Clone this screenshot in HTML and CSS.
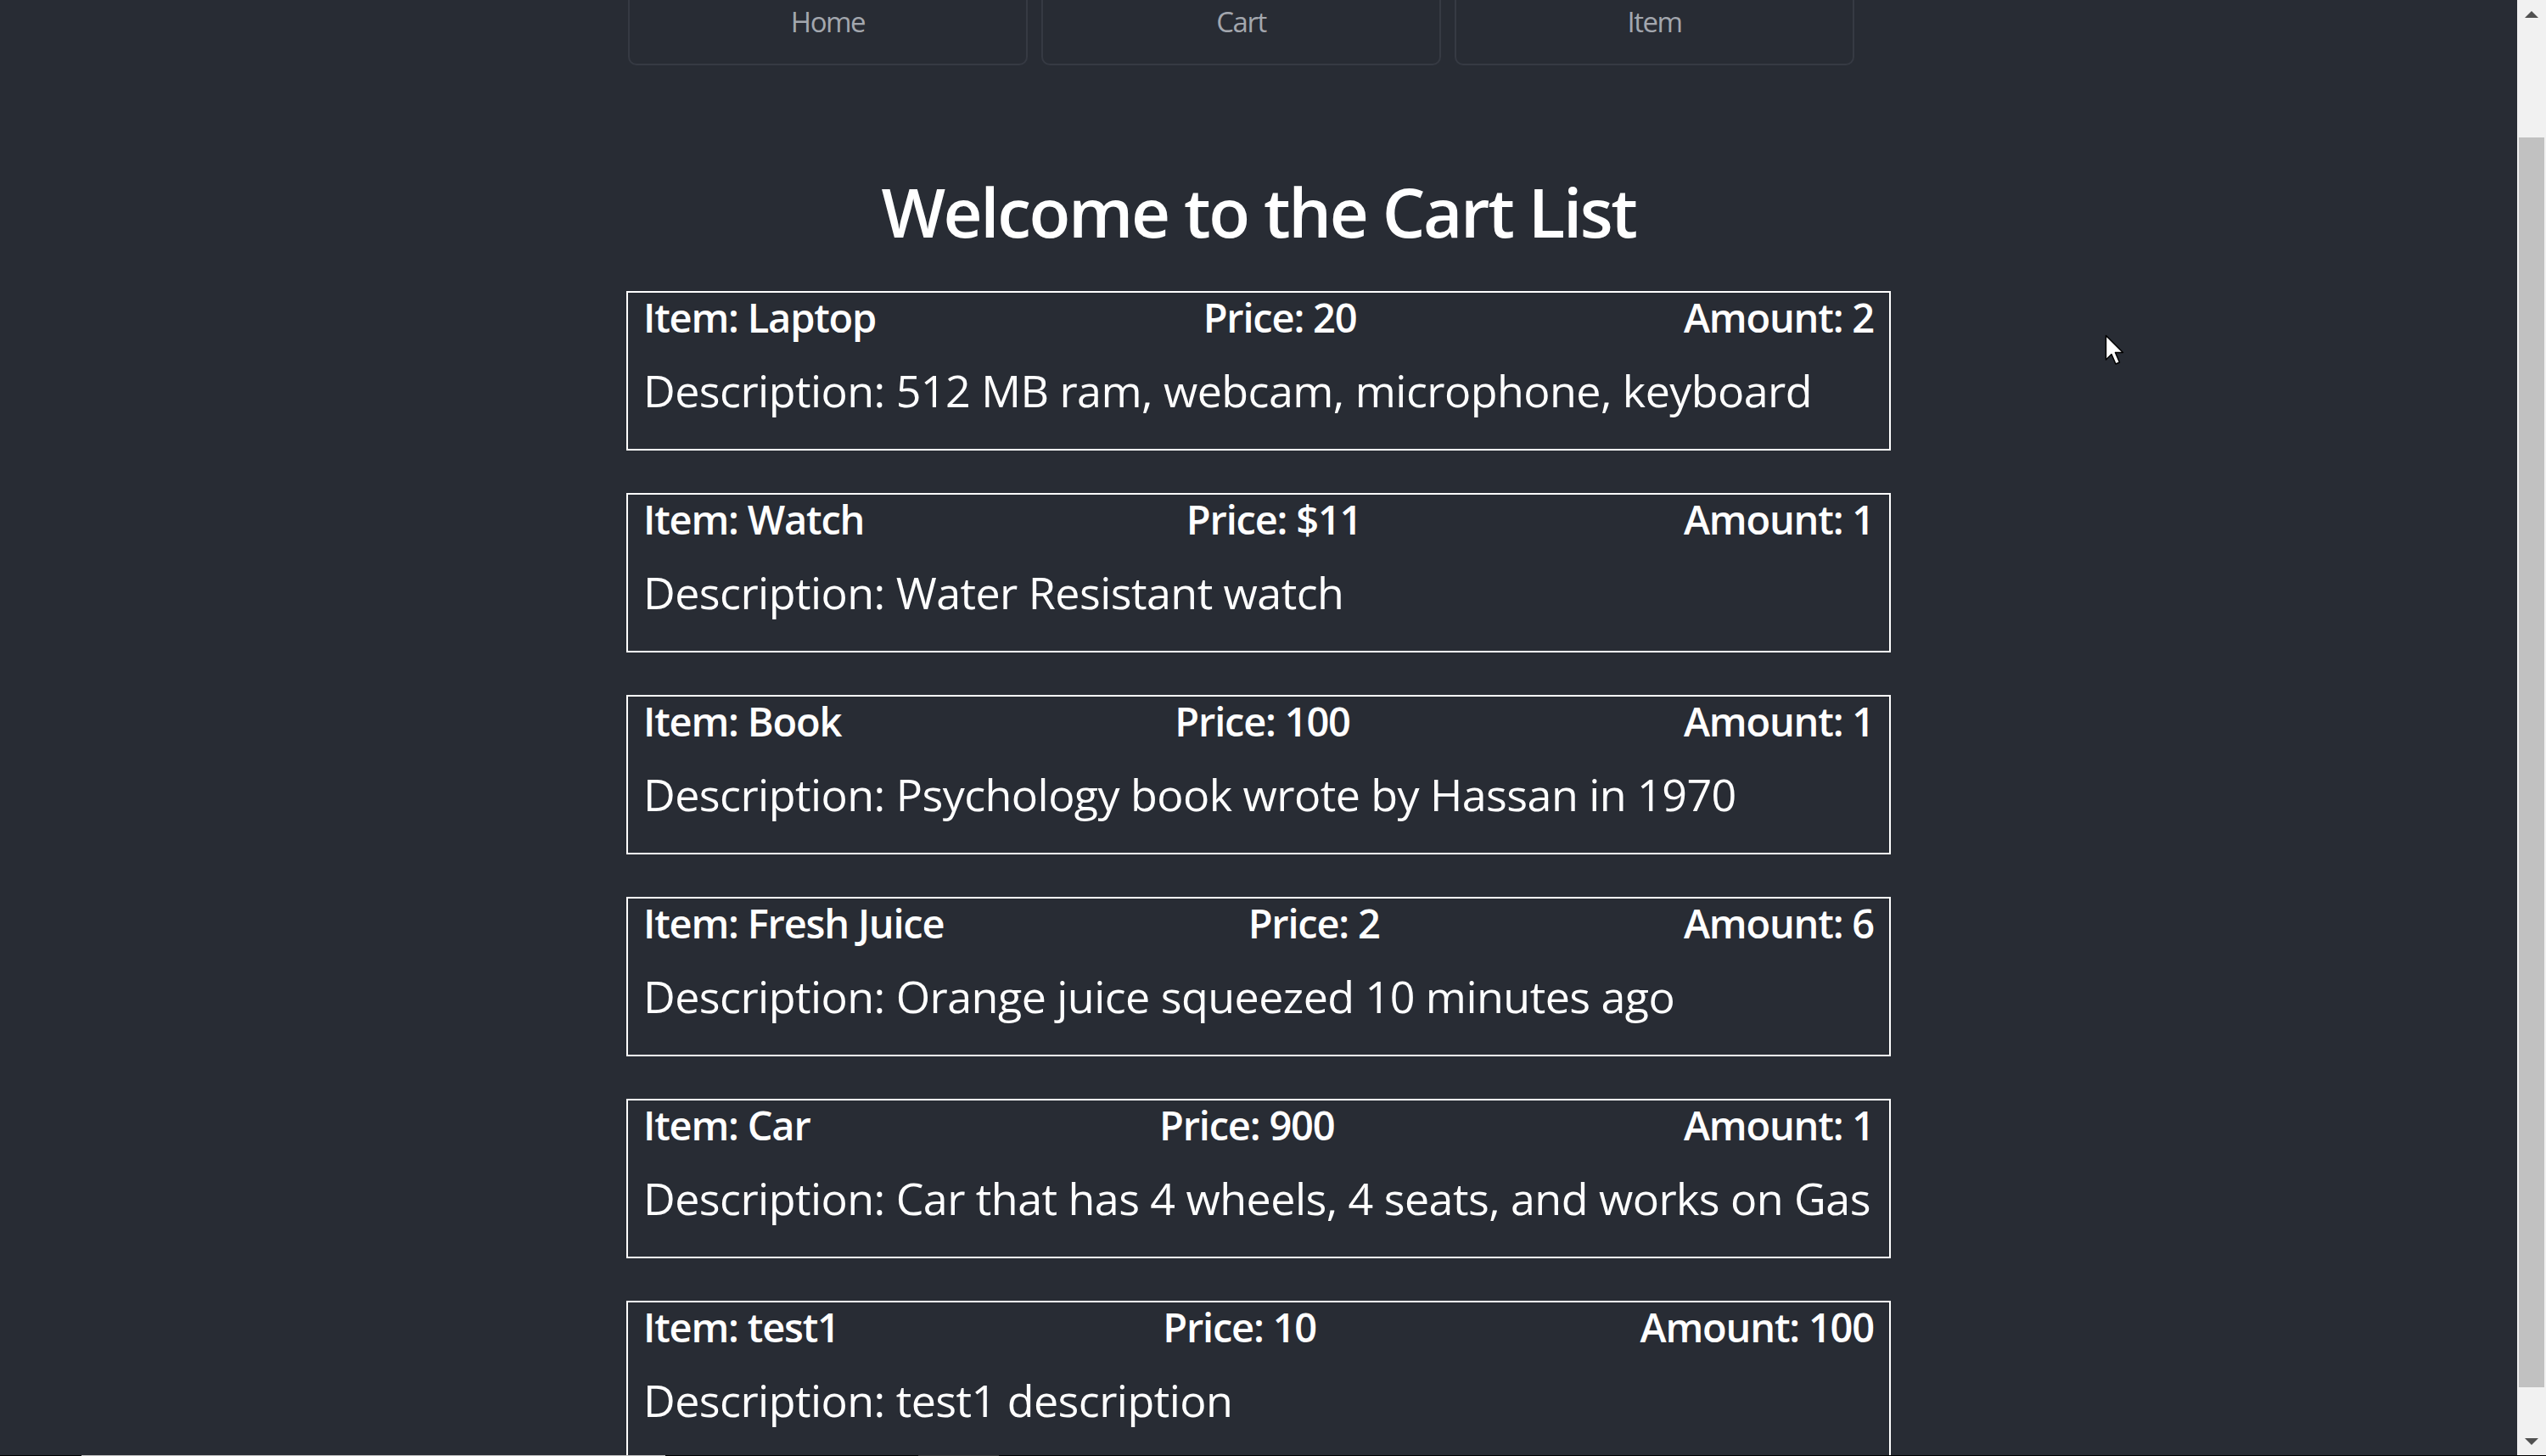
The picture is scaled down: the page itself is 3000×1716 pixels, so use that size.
FILE: index.html
```html
<!DOCTYPE html>
<html lang="en">
<head>
<meta charset="utf-8">
<title>Cart List</title>
<link rel="stylesheet" href="styles.css">
</head>
<body>
<div class="screen">
  <main class="page">
    <div class="container">
      <nav class="nav">
        <a class="nav-btn">Home</a>
        <a class="nav-btn">Cart</a>
        <a class="nav-btn">Item</a>
      </nav>
      <h1 class="title">Welcome to the Cart List</h1>
      <ul class="cart">
        <li class="card">
          <div class="card-row"><span>Item: Laptop</span><span>Price: 20</span><span>Amount: 2</span></div>
          <p class="desc">Description: 512 MB ram, webcam, microphone, keyboard</p>
        </li>
        <li class="card">
          <div class="card-row"><span>Item: Watch</span><span>Price: $11</span><span>Amount: 1</span></div>
          <p class="desc">Description: Water Resistant watch</p>
        </li>
        <li class="card">
          <div class="card-row"><span>Item: Book</span><span>Price: 100</span><span>Amount: 1</span></div>
          <p class="desc">Description: Psychology book wrote by Hassan in 1970</p>
        </li>
        <li class="card">
          <div class="card-row"><span>Item: Fresh Juice</span><span>Price: 2</span><span>Amount: 6</span></div>
          <p class="desc">Description: Orange juice squeezed 10 minutes ago</p>
        </li>
        <li class="card">
          <div class="card-row"><span>Item: Car</span><span>Price: 900</span><span>Amount: 1</span></div>
          <p class="desc">Description: Car that has 4 wheels, 4 seats, and works on Gas</p>
        </li>
        <li class="card">
          <div class="card-row"><span>Item: test1</span><span>Price: 10</span><span>Amount: 100</span></div>
          <p class="desc">Description: test1 description</p>
        </li>
      </ul>
    </div>
  </main>
  <div class="scrollbar">
    <div class="sb-btn"><span class="tri tri-up"></span></div>
    <div class="sb-track"><div class="sb-thumb"></div></div>
    <div class="sb-btn"><span class="tri tri-down"></span></div>
  </div>
</div>
<svg class="cursor" width="24" height="37" viewBox="0 0 24 37">
  <path d="M1.5 1.5 V30 L8 23.5 L13 35 L17.5 33 L12.5 21.5 H21.5 Z" fill="#fff" stroke="#000" stroke-width="1.5" stroke-linejoin="round"/>
</svg>
<div class="edge"><span class="edge-a"></span><span class="edge-b"></span></div>
</body>
</html>
```
FILE: styles.css
```css
html, body {
  margin: 0;
  padding: 0;
  height: 100%;
  overflow: hidden;
  background: #282c34;
}

body {
  font-family: "Open Sans", "Noto Sans", sans-serif;
  color: #ffffff;
}

.screen {
  display: flex;
  height: 1716px;
}

.page {
  flex: 1;
  overflow: hidden;
  background: #282c34;
}

.container {
  width: 1490px;
  margin: 0 auto;
}

.nav {
  display: flex;
  gap: 16px;
  margin-left: 2px;
}

.nav-btn {
  box-sizing: border-box;
  width: 471px;
  padding: 6px 0 29px;
  line-height: 40px;
  font-size: 33px;
  letter-spacing: -1.5px;
  text-align: center;
  color: #a3a7ae;
  border: 2px solid #363a43;
  border-top: 0;
  border-radius: 0 0 10px 10px;
}

.title {
  margin: 124px 0 46px;
  font-size: 80px;
  line-height: 96px;
  font-weight: 600;
  letter-spacing: -2.4px;
  text-align: center;
}

.cart {
  list-style: none;
  margin: 0;
  padding: 0;
}

.card {
  border: 2px solid #ffffff;
  padding: 1px 18px 38px;
  margin-bottom: 50px;
}

.card-row {
  display: flex;
  justify-content: space-between;
  font-size: 47px;
  line-height: 56px;
  font-weight: 600;
  letter-spacing: -1.2px;
  white-space: nowrap;
}

.desc {
  margin: 27px 0 0;
  font-size: 52px;
  line-height: 62px;
  letter-spacing: -0.55px;
  white-space: nowrap;
}

.scrollbar {
  width: 34px;
  flex: none;
  display: flex;
  flex-direction: column;
  background: #f1f1f1;
}

.sb-btn {
  height: 34px;
  flex: none;
  display: flex;
  align-items: center;
  justify-content: center;
}

.tri {
  width: 0;
  height: 0;
  border-left: 8px solid transparent;
  border-right: 8px solid transparent;
}

.tri-up {
  border-bottom: 8px solid #505050;
}

.tri-down {
  border-top: 8px solid #505050;
}

.sb-track {
  flex: 1;
  display: flex;
  flex-direction: column;
}

.sb-thumb {
  margin: 128px 2px 0;
  height: 1473px;
  background: #c1c1c1;
}

.cursor {
  position: fixed;
  left: 2480px;
  top: 394px;
}

.edge {
  position: fixed;
  left: 0;
  right: 0;
  bottom: 0;
  height: 1px;
  background: #000;
}

.edge-a {
  position: absolute;
  left: 96px;
  width: 688px;
  height: 1px;
  background: #c4c4c4;
}

.edge-b {
  position: absolute;
  left: 1082px;
  width: 95px;
  height: 1px;
  background: #3a3a3a;
}
```
